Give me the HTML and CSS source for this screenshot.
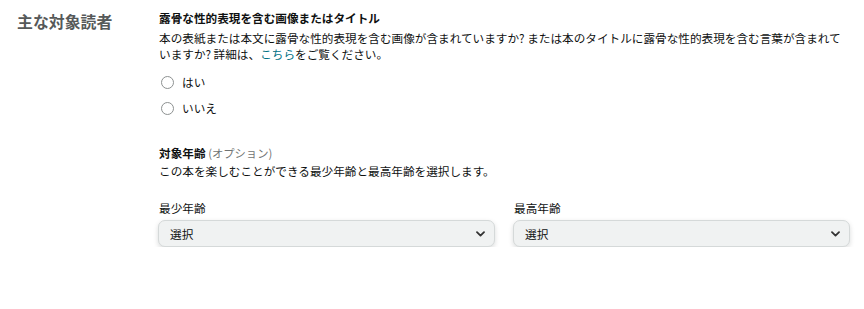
FILE: index.html
```html
<!DOCTYPE html>
<html lang="ja">
<head>
<meta charset="utf-8">
<link rel="stylesheet" href="styles.css">
</head>
<body>
<div class="page">
  <div class="side">
    <h2 class="side-title">主な対象読者</h2>
  </div>
  <div class="main">
    <div class="field">
      <div class="field-title">露骨な性的表現を含む画像またはタイトル</div>
      <p class="field-desc">本の表紙または本文に露骨な性的表現を含む画像が含まれていますか? または本のタイトルに露骨な性的表現を含む言葉が含まれて<br>いますか? 詳細は、<a class="link" href="#">こちら</a>をご覧ください。</p>
      <div class="radios">
        <label class="radio"><span class="radio-dot"></span><span class="radio-label">はい</span></label>
        <label class="radio"><span class="radio-dot"></span><span class="radio-label">いいえ</span></label>
      </div>
    </div>
    <div class="field field-age">
      <div class="field-title">対象年齢 <span class="optional">(オプション)</span></div>
      <p class="field-desc">この本を楽しむことができる最少年齢と最高年齢を選択します。</p>
      <div class="selects">
        <div class="select-group">
          <div class="select-label">最少年齢</div>
          <div class="select">
            <span class="select-text">選択</span>
            <svg class="chevron" width="9" height="6" viewBox="0 0 9 6"><path d="M1 1.2 L4.5 4.6 L8 1.2" fill="none" stroke="#333" stroke-width="1.8" stroke-linecap="round" stroke-linejoin="round"/></svg>
          </div>
        </div>
        <div class="select-group">
          <div class="select-label">最高年齢</div>
          <div class="select">
            <span class="select-text">選択</span>
            <svg class="chevron" width="9" height="6" viewBox="0 0 9 6"><path d="M1 1.2 L4.5 4.6 L8 1.2" fill="none" stroke="#333" stroke-width="1.8" stroke-linecap="round" stroke-linejoin="round"/></svg>
          </div>
        </div>
      </div>
    </div>
  </div>
</div>
</body>
</html>
```

FILE: styles.css
```css
* { box-sizing: border-box; }
html, body {
  margin: 0;
  padding: 0;
  background: #ffffff;
}
body {
  font-family: "Noto Sans CJK JP", "Noto Sans", sans-serif;
  color: #0f1111;
  font-size: 11.63px;
}
.page {
  display: flex;
  padding-top: 10px;
}
.side {
  width: 159px;
  flex: 0 0 159px;
  padding-left: 17px;
}
.side-title {
  margin: 0;
  font-size: 15.9px;
  line-height: 24px;
  font-weight: 700;
  color: #565959;
}
.main {
  width: 692px;
  flex: 0 0 692px;
}
.field-title {
  font-weight: 700;
  line-height: 16px;
}
.optional {
  font-weight: 400;
  color: #6f7373;
  font-size: 11.3px;
}
.field-desc {
  margin: 4px 0 0;
  line-height: 16px;
}
.link {
  color: #007185;
  text-decoration: none;
}
.radios {
  margin-top: 10px;
  display: flex;
  flex-direction: column;
  gap: 6px;
}
.radio {
  display: flex;
  align-items: center;
  height: 20px;
  padding-left: 2px;
}
.radio-dot {
  width: 13px;
  height: 13px;
  border: 1px solid #8d9191;
  border-radius: 50%;
  background: #fff;
  margin-right: 8px;
}
.radio-label {
  line-height: 20px;
}
.field-age {
  margin-top: 27px;
}
.field-age .field-desc {
  margin-top: 2px;
}
.selects {
  margin-top: 21px;
  display: grid;
  grid-template-columns: 337px 337px;
  column-gap: 18px;
  margin-left: -1px;
}
.select-label {
  line-height: 16px;
  margin-left: 1px;
  margin-bottom: 4px;
}
.select {
  height: 27px;
  display: flex;
  align-items: center;
  justify-content: space-between;
  padding: 0 9px 0 11px;
  background: #f0f2f2;
  border: 1px solid #d5d9d9;
  border-radius: 7px;
  box-shadow: 0 2px 5px rgba(15, 17, 17, 0.15);
}
.select-text {
  line-height: 16px;
}
.chevron {
  display: block;
}
```
